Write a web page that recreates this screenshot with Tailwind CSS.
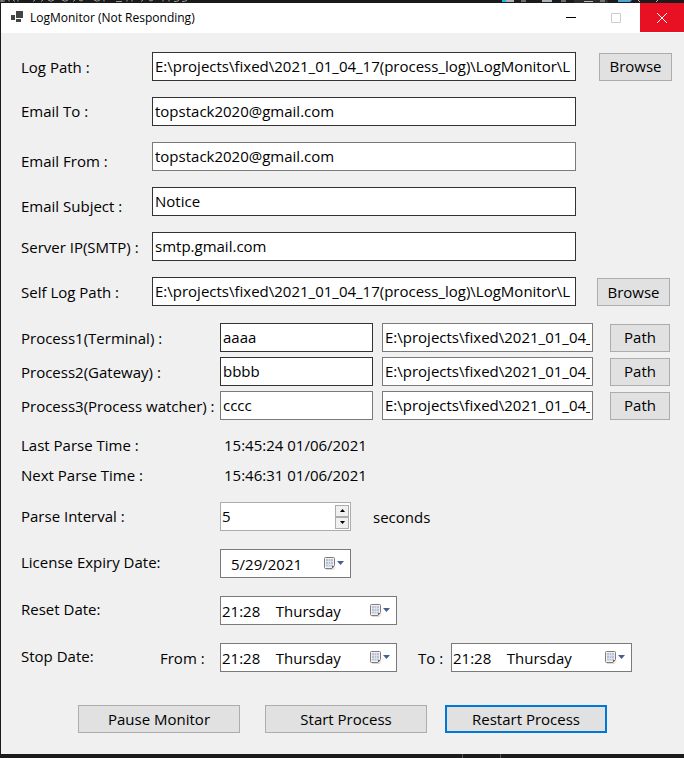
<!DOCTYPE html>
<html lang="en">
<head>
<meta charset="utf-8">
<title>LogMonitor (Not Responding)</title>
<script src="https://cdn.jsdelivr.net/npm/@tailwindcss/browser@4"></script>
</head>
<body class="min-h-screen flex flex-col bg-[#1b1b1b] font-['Open_Sans','Noto_Sans',sans-serif] text-[15px] leading-5 text-black">
<svg class="hidden">
  <symbol id="cal" viewBox="0 0 21 14">
    <path d="M2 12.500h7l2.500-2" fill="none" stroke="#dcd9d8"/>
    <path d="M.5 1.500q0-1 1-1h8q1 0 1 1v7l-2.500 3H1.500q-1 0-1-1z" fill="#eef1f6" stroke="#857a76"/>
    <path d="M2 2h7v7.500H2z" fill="#b9c2d2"/>
    <path d="M2 4.500h7M2 7.500h7M4.500 2v7.500M6.500 2v7.500" stroke="#e3e8f0" stroke-width=".7"/>
    <path d="M8 11.500V9h2.500z" fill="#6b5f5c"/>
    <path d="M13 4h7l-3.500 4z" fill="#44608f"/>
  </symbol>
</svg>
<div class="h-[3px] flex justify-between overflow-hidden">
  <svg class="h-[3px] w-[190px]" viewBox="0 0 190 3" fill="none" stroke="#9a9a9a"><path d="M0 1h5M2 0v2M9 0v1.500M13 0l2 1.500M18 0v1.500M33 1.500l2-1.500M41 1.500l2-1.500M48 0q3 2.500 6 0M62 0q3 2.500 6 0M73 1.500l2-1.500M79 0q2 2 4 0M94 0q3 2.500 6 0M104 0v1.500M116 1.500h6M127 0v1.500M132 0v1.500M141 1.500l2-1.500M149 0q2 2 4 0M163 0v1.500M169 0v1.500M174 1.500q3 0 5-1M182 1.500q3 0 5-1"/></svg>
  <svg class="h-[3px] w-[184px]" viewBox="0 0 184 3"><path d="M2 0h4v2H2z" fill="#1fb6ea"/><path d="M6 0h8v2H6zM42 0h10v2H42zM84 1h9v1h-9z" fill="#a9b4bc"/><path d="M74 0h34v3H74z" fill="#fff" fill-opacity=".08"/><path d="M118 0h14l-2 2h-12z" fill="#4ba3d8"/><path d="M21 1h5M61 1h5M100 1h5M138 0l2 2M158 0l-2 2" stroke="#bbb"/></svg>
</div>
<main class="flex-1 flex flex-col ml-px bg-[#f0f0f0]">
  <header class="h-[30px] flex items-center bg-white pl-2.5">
    <svg class="w-3 h-3 mr-[7px] -mt-0.5" viewBox="0 0 12 12" fill="#444"><path d="M5 0h7v7H5zM0 4h4v5H0zM5 8h5v3H5z"/></svg>
    <h1 class="flex-1 text-[12px]">LogMonitor (Not Responding)</h1>
    <button aria-label="Minimize" class="w-[42px] h-full flex items-center justify-center"><svg class="w-2.5 h-2.5" viewBox="0 0 10 10"><path d="M0 4.500h10" stroke="#000"/></svg></button>
    <button aria-label="Maximize" disabled class="w-12 h-full flex items-center justify-center"><svg class="w-2.5 h-2.5" viewBox="0 0 10 10"><path d="M.5.5h9v9h-9z" fill="none" stroke="#ccc"/></svg></button>
    <button aria-label="Close" class="w-11 h-[29px] self-start bg-[#e81123] flex items-center justify-center"><svg class="w-2.5 h-2.5" viewBox="0 0 10 10"><path d="M0 0l10 10M10 0L0 10" stroke="#fff"/></svg></button>
  </header>

  <form class="flex flex-col pl-5 pt-[19px]">
    <section class="flex flex-col gap-4 pr-3">
      <div class="flex items-center">
        <label for="log" class="w-[131px]">Log Path :</label>
        <input id="log" class="flex-1 min-w-0 h-[29px] border border-[#333] bg-white px-0.5 pb-0.5" value="E:\projects\fixed\2021_01_04_17(process_log)\LogMonitor\L">
        <div class="w-24 flex justify-end"><button type="button" class="w-[73px] h-7 border border-[#adadad] bg-[#e1e1e1] pb-0.5">Browse</button></div>
      </div>
      <div class="flex items-center pr-24">
        <label for="to" class="w-[131px] pb-0.5">Email To :</label>
        <input id="to" class="flex-1 min-w-0 h-[29px] border border-[#333] bg-white px-0.5 pb-0.5" value="topstack2020@gmail.com">
      </div>
      <div class="flex items-end pr-24">
        <label for="from" class="w-[131px]">Email From :</label>
        <input id="from" class="flex-1 min-w-0 h-[29px] border border-[#7a7a7a] bg-white px-0.5 pb-0.5" value="topstack2020@gmail.com">
      </div>
      <div class="flex items-end pr-24">
        <label for="subject" class="w-[131px]">Email Subject :</label>
        <input id="subject" class="flex-1 min-w-0 h-[29px] border border-[#333] bg-white px-0.5 pb-0.5" value="Notice">
      </div>
      <div class="flex items-center pr-24">
        <label for="smtp" class="w-[131px]">Server IP(SMTP) :</label>
        <input id="smtp" class="flex-1 min-w-0 h-[29px] border border-[#333] bg-white px-0.5 pb-0.5" value="smtp.gmail.com">
      </div>
      <div class="flex items-center">
        <label for="self" class="w-[131px]">Self Log Path :</label>
        <input id="self" class="flex-1 min-w-0 h-[29px] border border-[#333] bg-white px-0.5 pb-0.5" value="E:\projects\fixed\2021_01_04_17(process_log)\LogMonitor\L">
        <div class="w-24 flex justify-end pr-0.5"><button type="button" class="w-[73px] h-7 border border-[#adadad] bg-[#e1e1e1]">Browse</button></div>
      </div>
    </section>

    <section class="flex flex-col gap-[5px] pr-3.5 mt-[17px]">
      <div class="flex items-center">
        <label for="p1" class="w-[199px] whitespace-nowrap">Process1(Terminal) :</label>
        <input id="p1" class="w-[153px] h-[29px] border border-[#333] bg-white px-0.5 pb-0.5" value="aaaa">
        <input aria-label="Process1 path" class="flex-1 min-w-0 h-[29px] ml-[9px] mr-[17px] border border-[#7a7a7a] bg-white px-0.5 pb-0.5" value="E:\projects\fixed\2021_01_04_17">
        <button type="button" class="w-[60px] h-7 border border-[#adadad] bg-[#e1e1e1] pb-0.5">Path</button>
      </div>
      <div class="flex items-center">
        <label for="p2" class="w-[199px] whitespace-nowrap">Process2(Gateway) :</label>
        <input id="p2" class="w-[153px] h-[29px] border border-[#333] bg-white px-0.5 pb-0.5" value="bbbb">
        <input aria-label="Process2 path" class="flex-1 min-w-0 h-[29px] ml-[9px] mr-[17px] border border-[#7a7a7a] bg-white px-0.5 pb-0.5" value="E:\projects\fixed\2021_01_04_17">
        <button type="button" class="w-[60px] h-7 border border-[#adadad] bg-[#e1e1e1] pb-0.5">Path</button>
      </div>
      <div class="flex items-center">
        <label for="p3" class="w-[199px] whitespace-nowrap">Process3(Process watcher) :</label>
        <input id="p3" class="w-[153px] h-[29px] border border-[#7a7a7a] bg-white px-0.5 pb-0.5" value="cccc">
        <input aria-label="Process3 path" class="flex-1 min-w-0 h-[29px] ml-[9px] mr-[17px] border border-[#7a7a7a] bg-white px-0.5 pb-0.5" value="E:\projects\fixed\2021_01_04_17">
        <button type="button" class="w-[60px] h-7 border border-[#adadad] bg-[#e1e1e1] pb-0.5">Path</button>
      </div>
    </section>

    <dl class="grid grid-cols-[203px_1fr] gap-y-2.5 mt-[15px]">
      <dt>Last Parse Time :</dt><dd>15:45:24 01/06/2021</dd>
      <dt>Next Parse Time :</dt><dd>15:46:31 01/06/2021</dd>
    </dl>

    <section class="flex flex-col gap-[18px] mt-[17px]">
      <div class="flex items-center">
        <label for="interval" class="w-[199px] pb-0.5">Parse Interval :</label>
        <div class="w-[131px] h-[29px] flex items-center border border-[#abadb3] bg-white pr-px">
          <input id="interval" inputmode="numeric" class="flex-1 min-w-0 h-full pl-px pb-0.5" value="5">
          <div class="flex flex-col">
            <button type="button" aria-label="Increase" class="w-3.5 h-3 border border-[#acacac] bg-[#f0f0f0] flex items-center justify-center"><svg class="w-[5px] h-[3px]" viewBox="0 0 5 3"><path d="M0 3L2.500 0 5 3z"/></svg></button>
            <button type="button" aria-label="Decrease" class="w-3.5 h-3 border border-[#acacac] bg-[#f0f0f0] flex items-center justify-center"><svg class="w-[5px] h-[3px]" viewBox="0 0 5 3"><path d="M0 0L2.500 3 5 0z"/></svg></button>
          </div>
        </div>
        <span class="ml-[22px]">seconds</span>
      </div>
      <div class="flex items-center">
        <label for="expiry" class="w-[199px] pb-1">License Expiry Date:</label>
        <div class="w-[131px] h-[29px] flex items-center border border-[#7a7a7a] bg-white pr-[5px]">
          <input id="expiry" class="flex-1 min-w-0 h-full pl-2.5" value="5/29/2021">
          <button type="button" aria-label="Open calendar"><svg class="w-[21px] h-3.5"><use href="#cal"/></svg></button>
        </div>
      </div>
      <div class="flex items-center">
        <label for="reset" class="w-[199px] pb-1">Reset Date:</label>
        <div class="w-[177px] h-[29px] flex items-center border border-[#7a7a7a] bg-white pr-[5px]">
          <input id="reset" class="flex-1 min-w-0 h-full pl-px" value="21:28    Thursday">
          <button type="button" aria-label="Open calendar"><svg class="w-[21px] h-3.5"><use href="#cal"/></svg></button>
        </div>
      </div>
      <div class="flex items-center">
        <span class="w-[139px] pb-1">Stop Date:</span>
        <label for="sfrom" class="w-[60px]">From :</label>
        <div class="w-[177px] h-[29px] flex items-center border border-[#7a7a7a] bg-white pr-[5px]">
          <input id="sfrom" class="flex-1 min-w-0 h-full pl-px" value="21:28    Thursday">
          <button type="button" aria-label="Open calendar"><svg class="w-[21px] h-3.5"><use href="#cal"/></svg></button>
        </div>
        <label for="sto" class="w-[33px] ml-[21px]">To :</label>
        <div class="w-[181px] h-[29px] flex items-center border border-[#7a7a7a] bg-white pr-[5px]">
          <input id="sto" class="flex-1 min-w-0 h-full pl-px" value="21:28    Thursday">
          <button type="button" aria-label="Open calendar"><svg class="w-[21px] h-3.5"><use href="#cal"/></svg></button>
        </div>
      </div>
    </section>

    <div class="flex mt-[33px] ml-[57px]">
      <button type="button" class="w-[162px] h-7 border border-[#adadad] bg-[#e1e1e1]">Pause Monitor</button>
      <button type="button" class="w-[162px] h-7 ml-[25px] border border-[#adadad] bg-[#e1e1e1]">Start Process</button>
      <button type="button" class="w-[162px] h-7 ml-[18px] border-2 border-[#0078d7] bg-[#e1e1e1]">Restart Process</button>
    </div>
  </form>
</main>
<div class="h-1 flex pl-[462px]"><div class="w-[39px] border-x border-[#555]"></div></div>
</body>
</html>
